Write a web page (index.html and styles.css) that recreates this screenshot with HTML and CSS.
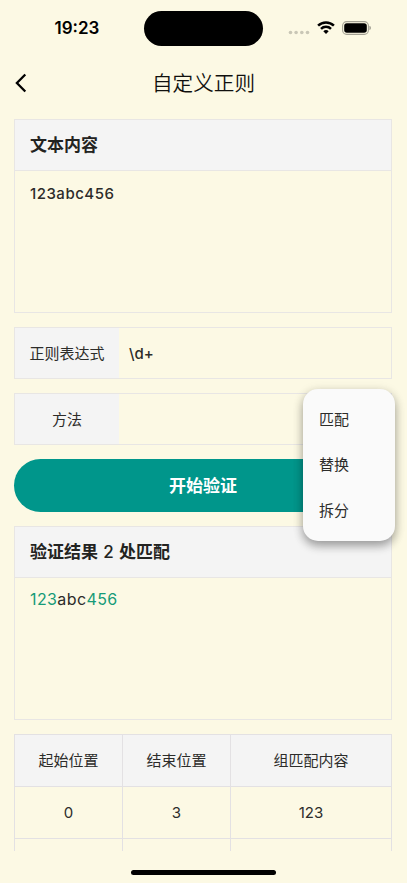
FILE: index.html
```
<!DOCTYPE html>
<html lang="zh-CN">
<head>
<meta charset="utf-8">
<title>自定义正则</title>
<link rel="stylesheet" href="styles.css">
</head>
<body>
<div class="screen">
  <header class="status">
    <div class="time">19:23</div>
    <div class="island"></div>
    <div class="indicators">
      <svg class="dots" width="22" height="5" viewBox="0 0 22 5" fill="#c9c7b6"><circle cx="2.5" cy="2.5" r="1.8"/><circle cx="8.1" cy="2.5" r="1.8"/><circle cx="13.8" cy="2.5" r="1.8"/><circle cx="19.5" cy="2.5" r="1.8"/></svg>
      <svg class="wifi" width="18" height="13" viewBox="0 0 18 13" fill="none" stroke="#000" stroke-width="2.5"><path d="M1.1 4.7a11.2 11.2 0 0 1 15.8 0"/><path d="M4 7.9a7.1 7.1 0 0 1 10 0"/><path d="M9 13L6.3 10.3a3.8 3.8 0 0 1 5.4 0z" fill="#000" stroke="none"/></svg>
      <svg class="battery" width="30" height="14" viewBox="0 0 30 14"><rect x=".6" y=".6" width="25.8" height="12.8" rx="4.1" fill="none" stroke="#a3a194" stroke-width="1.1"/><rect x="2.2" y="2.2" width="22.6" height="9.6" rx="2.7"/><path d="M27.4 4.8q1.6.6 1.6 2.2t-1.600 2.200z" fill="#a3a194"/></svg>
    </div>
  </header>
  <nav class="navbar">
    <svg class="back" width="12" height="20" viewBox="0 0 12 20" fill="none" stroke="#000" stroke-width="2.3"><path d="M10.300 1.500L1.900 10l8.400 8.500"/></svg>
    <h1 class="title">自定义正则</h1>
  </nav>
  <main class="content">
    <section class="panel">
      <h2 class="panel-head">文本内容</h2>
      <div class="panel-body source">123abc456</div>
    </section>
    <div class="field"><div class="label">正则表达式</div><div class="value">\d+</div></div>
    <div class="field method">
      <div class="label">方法</div><div class="value"></div>
      <div class="menu"><div class="option">匹配</div><div class="option">替换</div><div class="option">拆分</div></div>
    </div>
    <button class="submit">开始验证</button>
    <section class="panel">
      <h2 class="panel-head">验证结果 <span class="count">2</span> 处匹配</h2>
      <div class="panel-body result"><span class="hit">123</span>abc<span class="hit">456</span></div>
    </section>
    <div class="grid">
      <div class="cell head">起始位置</div><div class="cell head">结束位置</div><div class="cell head">组匹配内容</div>
      <div class="cell">0</div><div class="cell">3</div><div class="cell">123</div>
      <div class="cell"></div><div class="cell"></div><div class="cell"></div>
    </div>
  </main>
  <footer class="home"><div class="home-bar"></div></footer>
</div>
</body>
</html>
```
FILE: styles.css
```
* { box-sizing: border-box; }
body { margin: 0; background: #fcf9e4; color: #2c2c2a; font: 15px/20px Inter, "Noto Sans CJK SC", sans-serif; }
.screen { height: 883px; overflow: hidden; display: flex; flex-direction: column; }
.status { flex: none; height: 56px; display: grid; grid-template-columns: 144px 119px 1fr; align-items: center; }
.time { padding-left: 10px; text-align: center; font-size: 17px; font-weight: 600; color: #000; }
.island { height: 35px; border-radius: 18px; background: #000; }
.indicators { display: flex; align-items: center; padding-left: 25px; }
.dots { margin-top: 9px; }
.wifi { margin-left: 7px; margin-top: -1px; }
.battery { margin-left: 7px; }
.navbar { flex: none; height: 63px; padding: 0 14px 0 15px; display: grid; grid-template-columns: 13px 1fr 14px; align-items: center; }
.back { margin-top: -9px; }
.title { margin: -7px 0 0; text-align: center; font-size: 20.6px; line-height: 30px; font-weight: 350; color: #10100e; }
.content { flex: none; height: 732px; padding: 0 14px; padding-right: 15px; overflow: hidden; display: flex; flex-direction: column; gap: 14px; }
.panel { flex: none; height: 194px; border: 1px solid #e8e6e4; }
.panel-head { margin: 0; height: 51px; padding-left: 15px; border-bottom: 1px solid #e8e6e4; background: #f4f4f4; font-size: 17px; line-height: 50px; font-weight: 600; color: #232321; }
.count { margin: 0 1px; font-weight: 500; }
.panel-body { padding: 13px 15px; }
.source { font-weight: 450; letter-spacing: .5px; }
.result { padding-top: 11px; font-size: 16px; letter-spacing: .4px; }
.hit { color: #169b78; }
.field { flex: none; height: 52px; border: 1px solid #e8e6e4; display: flex; line-height: 51px; }
.label { width: 104px; background: #f4f4f4; text-align: center; }
.value { flex: 1; padding-left: 10px; font-weight: 500; }
.method { position: relative; }
.menu { position: absolute; z-index: 2; top: -5px; right: -4px; width: 92px; height: 152px; padding: 8px 16px; border-radius: 15px; background: #fafafa; box-shadow: 0 5px 10px rgba(0,0,0,.3), 0 2px 12px rgba(0,0,0,.12); }
.option { height: 45.400px; line-height: 46px; }
.submit { flex: none; height: 53px; border: 0; border-radius: 27px; background: #00968b; color: #fff; font: 600 17px/52px Inter, "Noto Sans CJK SC", sans-serif; padding: 0; }
.grid { flex: none; display: grid; grid-template-columns: 108px 108px 1fr; grid-auto-rows: 52px; border-top: 1px solid #e3e1e3; border-left: 1px solid #e3e1e3; }
.cell { border-right: 1px solid #e3e1e3; border-bottom: 1px solid #e3e1e3; text-align: center; line-height: 51px; }
.head { background: #f4f4f4; }
.home { flex: 1; display: flex; justify-content: center; }
.home-bar { width: 145px; height: 5px; margin-top: 19px; border-radius: 3px; background: #000; }
```
